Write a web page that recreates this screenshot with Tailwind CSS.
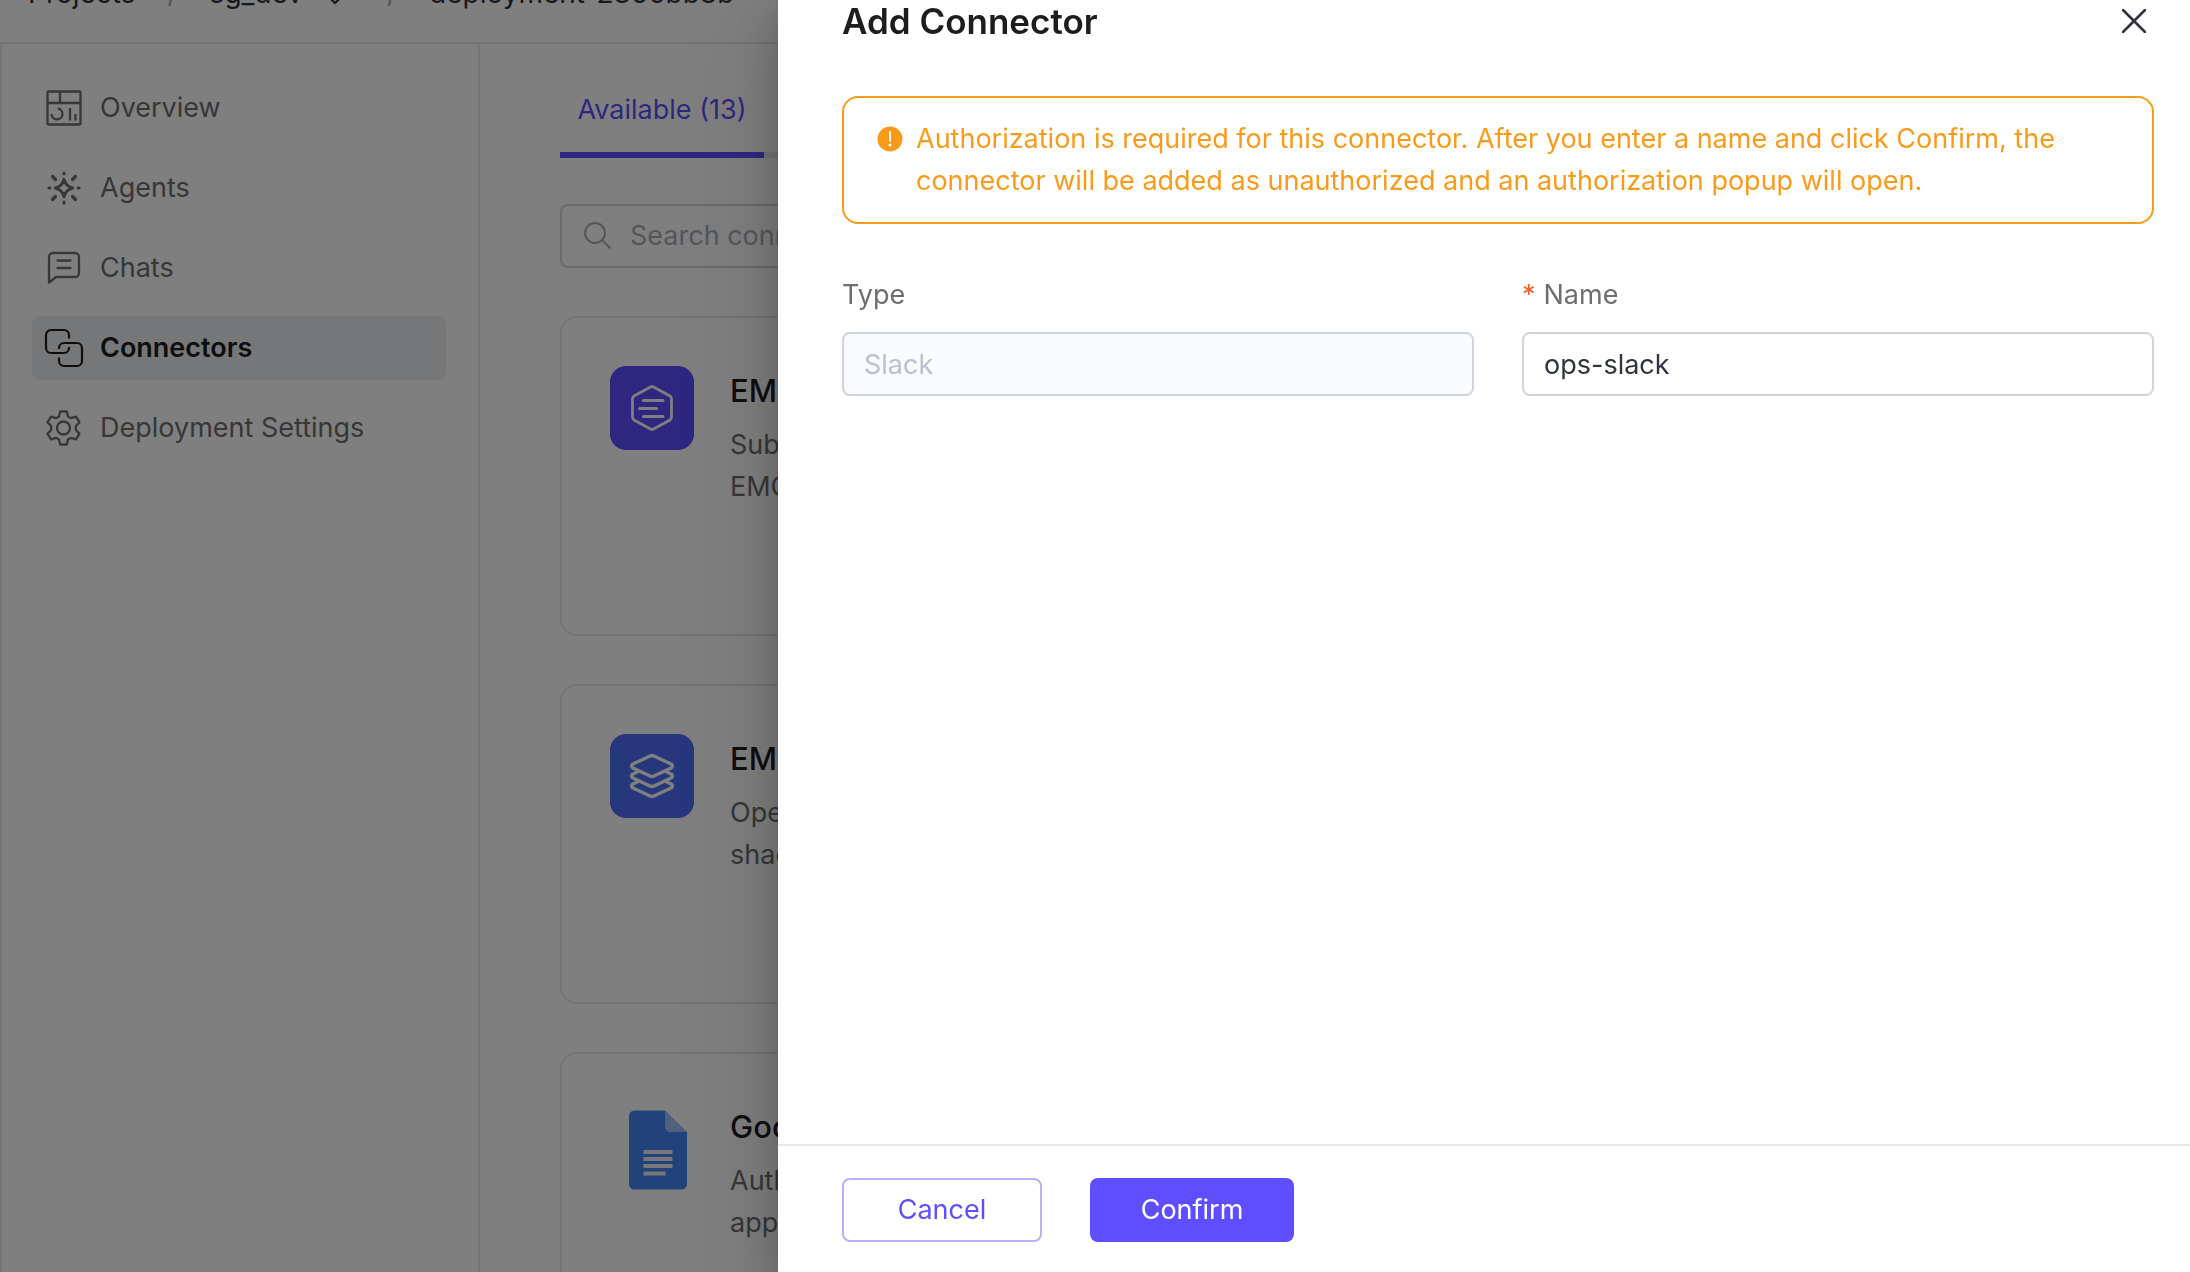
<!DOCTYPE html>
<html lang="en">
<head>
  <meta charset="UTF-8" />
  <meta name="viewport" content="width=device-width, initial-scale=1.0" />
  <title>Add Connector</title>
  <script src="https://cdn.jsdelivr.net/npm/@tailwindcss/browser@4"></script>
</head>
<body class="bg-white font-['Inter',sans-serif] text-[27px] leading-[42px] text-[#6e6e6e] h-screen overflow-hidden">
  <!-- page -->
  <div class="h-screen flex flex-col overflow-hidden">
    <header class="h-11 shrink-0 border-b-2 border-[#e8e8e8] px-7 overflow-hidden">
      <nav aria-label="Breadcrumb" class="-mt-7 flex items-center gap-8 text-[28px] text-[#303340] whitespace-nowrap">
        <a href="#">Projects</a>
        <span class="text-[#a3a8b8]">/</span>
        <a href="#" class="mr-2 flex items-center gap-5">sg_dev
          <svg class="size-6" viewBox="0 0 24 24" fill="none" stroke="currentColor" stroke-width="2.200"><path d="M2 12.500l10 9.500 10-9.500" /></svg>
        </a>
        <span class="text-[#a3a8b8]">/</span>
        <span>deployment-2866bb8b</span>
      </nav>
    </header>

    <div class="flex flex-1 min-h-0">
      <aside class="w-120 shrink-0 border-x-2 border-[#e8e8e8] pl-[30px] pr-8 py-8">
        <nav aria-label="Deployment" class="flex flex-col gap-4">
          <a href="#" class="h-16 px-3 flex items-center gap-4 rounded-lg">
            <svg class="size-10 shrink-0" viewBox="0 0 40 40" fill="none" stroke="currentColor" stroke-width="2.300">
              <rect x="3.500" y="3.500" width="33" height="33" rx="1" />
              <path d="M3.500 15h33M16 3.500V15" />
              <path d="M14 20.500a5.500 5.500 0 1 1-6.500 5.500" />
              <path d="M26 20v12.500M31.500 26v6.500" />
            </svg>
            Overview
          </a>
          <a href="#" class="h-16 px-3 flex items-center gap-4 rounded-lg">
            <svg class="size-10 shrink-0" viewBox="0 0 40 40" fill="none" stroke="currentColor" stroke-width="3.200" stroke-linecap="round" stroke-linejoin="round">
              <path d="M20 11.500c1.500 5 3.500 7 8.500 8.500-5 1.500-7 3.500-8.500 8.500-1.500-5-3.500-7-8.500-8.500 5-1.500 7-3.500 8.500-8.500z" />
              <path d="M20 5v.8M20 34.200v.8M5 20h.8M34.200 20h.8M8.500 8.500l3 3M31.500 8.500l-3 3M8.500 31.500l3-3M31.500 31.500l-3-3" />
            </svg>
            Agents
          </a>
          <a href="#" class="h-16 px-3 flex items-center gap-4 rounded-lg">
            <svg class="size-10 shrink-0" viewBox="0 0 40 40" fill="none" stroke="currentColor" stroke-width="2.300" stroke-linecap="round" stroke-linejoin="round">
              <path d="M5 34.500V9a4 4 0 0 1 4-4h22a4 4 0 0 1 4 4v16a4 4 0 0 1-4 4H12z" />
              <path d="M13.500 12.500h13M13.500 20h13" />
            </svg>
            Chats
          </a>
          <a href="#" aria-current="page" class="h-16 px-3 flex items-center gap-4 rounded-lg bg-[#eceef2] text-[#1d1d1f] font-semibold">
            <svg class="size-10 shrink-0" viewBox="0 0 40 40" fill="none" stroke="currentColor" stroke-width="2.200">
              <path d="M25 10.500V7a5 5 0 0 0-5-5H7a5 5 0 0 0-5 5v13a5 5 0 0 0 5 5h13a5 5 0 0 0 5-5v-1" />
              <path d="M15 29.500V33a5 5 0 0 0 5 5h13a5 5 0 0 0 5-5V20a5 5 0 0 0-5-5H20a5 5 0 0 0-5 5v1" />
            </svg>
            Connectors
          </a>
          <a href="#" class="h-16 px-3 flex items-center gap-4 rounded-lg">
            <svg class="size-10 shrink-0" viewBox="0 0 40 40" fill="none" stroke="currentColor" stroke-width="2.300" stroke-linejoin="round">
              <path d="M16.200 3.500h6.600l1.200 5 3 1.700 5-1.500 3.500 5.700-3.700 3.600v4l3.700 3.600-3.500 5.700-5-1.500-3 1.700-1.200 5h-6.600l-1.200-5-3-1.700-5 1.500-3.500-5.700 3.700-3.600v-4l-3.700-3.600 3.500-5.700 5 1.500 3-1.700z" />
              <circle cx="19.500" cy="20" r="6.500" />
            </svg>
            Deployment Settings
          </a>
        </nav>
      </aside>

      <main class="flex-1 min-w-0 px-20 pt-5">
        <div role="tablist" class="h-[94px] flex border-b-6 border-[#e6e6f5]">
          <button role="tab" aria-selected="true" class="h-[94px] w-51 shrink-0 pt-1 whitespace-nowrap border-b-6 border-[#5e4eff] text-[#5e4eff]">Available (13)</button>
        </div>
        <label class="mt-[46px] h-16 px-[22px] flex items-center gap-[18px] border-2 border-[#d0d4de] rounded-lg">
          <svg class="size-7 shrink-0" viewBox="0 0 28 28" fill="none" stroke="#a8adb8" stroke-width="2"><circle cx="11" cy="11" r="10" /><path d="M18.500 18.500l8 8" /></svg>
          <input type="text" aria-label="Search connectors" placeholder="Search connectors" class="flex-1 outline-none placeholder:text-[#a8adb8]" />
        </label>

        <div class="mt-12 flex flex-col gap-12">
          <article class="h-80 p-12 flex gap-9 border-2 border-[#e8e8e8] rounded-2xl">
            <svg class="size-21 shrink-0" viewBox="0 0 84 84" fill="none" stroke="#fff" stroke-width="3" stroke-linecap="round" stroke-linejoin="round">
              <rect width="84" height="84" rx="16" fill="#5e4eff" stroke="none" />
              <path d="M40.500 21Q42 20 43.500 21L60 30Q61.500 31 61.500 33V51Q61.500 53 60 54L43.500 63Q42 64 40.500 63L24 54Q22.500 53 22.500 51V33Q22.500 31 24 30z" stroke-width="2.800" />
              <path d="M33.500 34.500h19.500M29.500 42.500h17M33.500 50.500h19.500" />
            </svg>
            <div>
              <h3 class="mt-1 text-[31px] font-medium text-[#1d1d1f] leading-[42px]">EMQX</h3>
              <p class="mt-3">Subscribe<br />EMQX</p>
            </div>
          </article>
          <article class="h-80 p-12 flex gap-9 border-2 border-[#e8e8e8] rounded-2xl">
            <svg class="size-21 shrink-0" viewBox="0 0 84 84" fill="none" stroke="#fff" stroke-width="3.400" stroke-linecap="round" stroke-linejoin="round">
              <rect width="84" height="84" rx="16" fill="#4f6ef7" stroke="none" />
              <path d="M40 22Q42 21 44 22L61 30Q64 32 61 34L44 42Q42 43 40 42L23 34Q20 32 23 30z" />
              <path d="M29 37L23 40Q20 42 23 44L40 52Q42 53 44 52L61 44Q64 42 61 40L55 37" />
              <path d="M29 47L23 50Q20 52 23 54L40 62Q42 63 44 62L61 54Q64 52 61 50L55 47" />
            </svg>
            <div>
              <h3 class="mt-1 text-[31px] font-medium text-[#1d1d1f] leading-[42px]">EMQX</h3>
              <p class="mt-3">Operate<br />shadows</p>
            </div>
          </article>
          <article class="h-80 p-12 flex gap-9 border-2 border-[#e8e8e8] rounded-2xl">
            <svg class="size-21 shrink-0 overflow-visible" viewBox="0 0 84 84">
              <path d="M24.500 8.500H55L77 30.500V82a5.500 5.500 0 0 1-5.500 5.500h-47A5.500 5.500 0 0 1 19 82V14a5.500 5.500 0 0 1 5.500-5.500z" fill="#4285f4" />
              <path d="M55 8.500L77 30H60.500a5.500 5.500 0 0 1-5.500-5.500z" fill="#a1c2fa" />
              <path d="M33.500 48h29v4h-29zM33.500 55h29v4h-29zM33.500 62h29v4h-29zM33.500 69.500h22v4h-22z" fill="#f1f1f1" />
            </svg>
            <div>
              <h3 class="mt-1 text-[31px] font-medium text-[#1d1d1f] leading-[42px]">Google</h3>
              <p class="mt-3">Authorize<br />apps</p>
            </div>
          </article>
        </div>
      </main>
    </div>
  </div>

  <!-- mask + drawer -->
  <div class="fixed inset-0 flex justify-end bg-black/50">
    <section role="dialog" aria-labelledby="drawerTitle" class="w-[calc(100%-778px)] flex flex-col bg-white shadow-[0_16px_48px_16px_rgba(0,0,0,0.08),0_12px_32px_rgba(0,0,0,0.12),0_8px_16px_-8px_rgba(0,0,0,0.16),0_32px_96px_32px_rgba(0,0,0,0.08)]">
      <header class="h-[42px] shrink-0 pl-16 pr-11 flex items-center justify-between">
        <h2 id="drawerTitle" class="text-[35px] font-semibold text-[#1d1d1f]">Add Connector</h2>
        <button aria-label="Close" class="text-[#303340]">
          <svg class="size-6" viewBox="0 0 24 24" fill="none" stroke="currentColor" stroke-width="2.600" stroke-linecap="round"><path d="M1 1l22 22M23 1L1 23" /></svg>
        </button>
      </header>

      <form id="connectorForm" class="flex-1 pl-16 pr-9 pt-[54px]">
        <div role="alert" class="pl-8 pr-8 py-5 flex gap-3 border-2 border-[#fa9a1a] rounded-2xl text-[#fa9a1a]">
          <svg class="size-7 mt-2 shrink-0" viewBox="0 0 28 28">
            <circle cx="14" cy="13" r="12.500" fill="currentColor" />
            <path d="M14 6v9" stroke="#fff" stroke-width="2" stroke-linecap="round" />
            <circle cx="14" cy="19" r="1.500" fill="#fff" />
          </svg>
          <p>Authorization is required for this connector. After you enter a name and click Confirm, the<br class="hidden xl:inline" /> connector will be added as unauthorized and an authorization popup will open.</p>
        </div>

        <div class="mt-[50px] grid grid-cols-2 gap-12">
          <div>
            <label for="typeInput" class="block">Type</label>
            <input id="typeInput" type="text" value="Slack" disabled
              class="mt-4 w-full h-16 px-5 border-2 border-[#cfd4df] rounded-lg bg-[#f9fbff] text-[#b9c0ce]" />
          </div>
          <div>
            <label for="nameInput" class="block"><span class="mr-2 text-[#f5622d]">*</span>Name</label>
            <input id="nameInput" type="text" value="ops-slack" required
              class="mt-4 w-full h-16 px-5 border-2 border-[#cfd4df] rounded-lg bg-white text-[#303340] outline-none" />
          </div>
        </div>
      </form>

      <footer class="shrink-0 border-t-2 border-[#e8e8e8] pl-16 pt-8 pb-[30px] flex gap-12">
        <button type="button" class="h-16 w-50 border-2 border-[#b7b0ff] rounded-lg text-[#5e4eff]">Cancel</button>
        <button type="submit" form="connectorForm" class="h-16 w-51 rounded-lg bg-[#5e4eff] text-white">Confirm</button>
      </footer>
    </section>
  </div>
</body>
</html>
